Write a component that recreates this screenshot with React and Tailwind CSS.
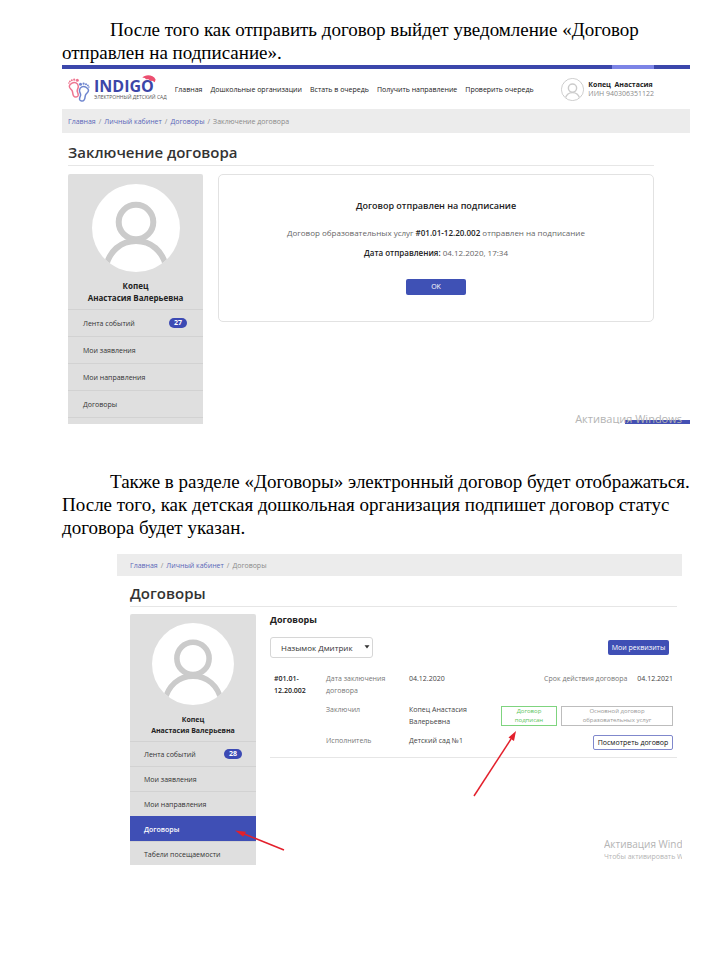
import React, { useState } from 'react';

const SANS = "font-['Open_Sans','Noto_Sans',sans-serif]";

const navLinks = [
    'Главная',
    'Дошкольные организации',
    'Встать в очередь',
    'Получить направление',
    'Проверить очередь',
];

const Avatar = ({ className }) => (
    <svg viewBox="0 0 88 88" className={className} aria-hidden="true">
        <defs>
            <clipPath id="avatar-clip">
                <circle cx="44" cy="44" r="44" />
            </clipPath>
        </defs>
        <circle cx="44" cy="44" r="44" fill="#fff" />
        <g clipPath="url(#avatar-clip)" fill="none" stroke="#cbcbcb" strokeWidth="6">
            <circle cx="44" cy="38" r="17.3" />
            <path d="M13.5 84C17 67 29 57 44 57s27 10 30.5 27" />
        </g>
    </svg>
);

const Foot = ({ color, transform }) => (
    <g transform={transform} stroke={color} fill="none" strokeWidth="1.5">
        <path d="M4 5.2C6.500 3.600 10 5 10.300 8.200c.2 2.300-1.300 3-1.100 4.900.2 1.600 1.300 2.500 1 4.300-.4 2-3.400 2.300-4.600.5-1.200-1.800-.5-3.500-1.500-5.300C3 11 1.200 10.300 1.300 8.100c.1-1.200 1.400-2.100 2.700-2.900z" />
        <g fill={color} stroke="none">
            <circle cx="9.300" cy="2.300" r="1.500" />
            <circle cx="6.200" cy="1.700" r="1.100" />
            <circle cx="3.800" cy="2.200" r="1" />
            <circle cx="1.900" cy="3.400" r=".9" />
            <circle cx=".9" cy="5.100" r=".8" />
        </g>
    </g>
);

const Logo = () => (
    <a href="#" className="flex items-center gap-1 shrink-0">
        <svg viewBox="0 0 22 25" className="w-[22px] h-[25px]" aria-hidden="true">
            <Foot color="#ee7590" transform="translate(0 1)" />
            <Foot color="#6f86cf" transform="translate(21.800 5) scale(-1 1)" />
        </svg>
        <span className="relative flex flex-col">
            <span className="text-[16px] leading-4 font-bold text-[#3c46a8]">INDIGO</span>
            <span className="text-[5px] leading-[6px] text-[#555] whitespace-nowrap">ЭЛЕКТРОННЫЙ ДЕТСКИЙ САД</span>
            <svg viewBox="0 0 14 8" className="absolute left-[48px] -top-[3px] w-[14px] h-2" aria-hidden="true">
                <path d="M.3 2.600C2.500-.5 11-1.200 13.600 4.600L12.800 7.200 10.300 5.800 8.600 6 6.400 4.200 4 4.200 2.800 2.900z" fill="#ec4f70" />
            </svg>
        </span>
    </a>
);

const Breadcrumbs = ({ items, className }) => (
    <nav className={`bg-[#ececec] flex items-center text-[7px] text-[#8a8a8a] ${className}`}>
        {items.map((item, i) => (
            <React.Fragment key={item}>
                {i > 0 && <span className="px-[3px]">/</span>}
                {i < items.length - 1 ? (
                    <a href="#" className="text-[#5a66b8]">{item}</a>
                ) : (
                    <span>{item}</span>
                )}
            </React.Fragment>
        ))}
    </nav>
);

const SidebarLink = ({ label, badge, active, className }) => (
    <a
        href="#"
        className={`flex items-center justify-between border-t text-[7px] ${className} ${
            active ? 'bg-[#3f4fb5] border-[#3f4fb5] text-white font-semibold' : 'border-[#d2d2d2] text-[#333]'
        }`}
    >
        {label}
        {badge && (
            <span className="bg-[#3c4ab4] text-white font-bold rounded-full w-[18px] h-[10px] leading-[10px] text-center">
                {badge}
            </span>
        )}
    </a>
);

/* Screen shown right after the contract has been sent */
const ContractSent = () => (
    <section className={`${SANS} relative h-[359px] overflow-hidden`}>
        <div className="flex h-1 bg-[#3b47ab] justify-end pr-9">
            <div className="w-[42px] bg-[#7c84e6]"></div>
        </div>
        <header className="h-10 pl-[6px] pr-9 flex items-center justify-between">
            <div className="flex items-center gap-2">
                <Logo />
                <nav className="flex gap-2 text-[7px] font-medium text-[#222] whitespace-nowrap">
                    {navLinks.map((link) => (
                        <a key={link} href="#">{link}</a>
                    ))}
                </nav>
            </div>
            <div className="flex items-center gap-1 whitespace-nowrap">
                <Avatar className="w-[23px] h-[23px] rounded-full border border-[#cbcbcb]" />
                <div>
                    <p className="text-[7px] leading-[9px] font-bold text-[#222]">Копец&nbsp; Анастасия</p>
                    <p className="text-[7px] leading-[9px] text-[#8a8a8a]">ИИН 940306351122</p>
                </div>
            </div>
        </header>
        <Breadcrumbs
            className="h-6 pl-[6px]"
            items={['Главная', 'Личный кабинет', 'Договоры', 'Заключение договора']}
        />
        <div className="pl-[6px] pr-9">
            <h1 className="text-[15px] leading-9 h-8 font-semibold text-[#333] border-b border-[#e6e6e6] mt-px">
                Заключение договора
            </h1>
            <div className="flex items-start gap-[15px] mt-2">
                <aside className="w-[135px] shrink-0 bg-[#dfdfdf] rounded-t-[2px] pt-[10px]">
                    <Avatar className="w-[88px] h-[88px] mx-auto" />
                    <p className="text-[8px] leading-3 font-bold text-[#222] text-center mt-2 mb-[5px]">
                        Копец<br />Анастасия Валерьевна
                    </p>
                    <SidebarLink className="h-[27px] pl-[15px] pr-4" label="Лента событий" badge="27" />
                    <SidebarLink className="h-[27px] pl-[15px] pr-4" label="Мои заявления" />
                    <SidebarLink className="h-[27px] pl-[15px] pr-4" label="Мои направления" />
                    <SidebarLink className="h-[27px] pl-[15px] pr-4" label="Договоры" />
                    <div className="h-[26px] border-t border-[#d2d2d2]"></div>
                </aside>
                <div className="flex-1 border border-[#e2e2e2] rounded-[5px] h-[148px] flex flex-col items-center text-[8px] text-[#666] pt-6">
                    <h2 className="text-[9px] leading-[14px] font-semibold text-[#222]">Договор отправлен на подписание</h2>
                    <p className="leading-3 mt-[14px]">
                        Договор образовательных услуг <b className="text-[#222] font-semibold">#01.01-12.20.002</b> отправлен на подписание
                    </p>
                    <p className="leading-3 mt-2">
                        <b className="text-[#222] font-semibold">Дата отправления:</b> 04.12.2020, 17:34
                    </p>
                    <button className="mt-5 w-[60px] h-4 rounded-[2px] bg-[#3f51b5] text-white text-[7px] leading-4">OK</button>
                </div>
            </div>
        </div>
        <div className="absolute right-0 bottom-0 w-[65px] h-1 bg-[#4450b4]"></div>
        <p className="absolute right-2 bottom-0 text-[11px] leading-[10px] text-[#b4b4b4]">Активация Windows</p>
    </section>
);

const ContractTable = () => (
    <table className="w-full text-[7px] leading-3 text-[#444] text-left border-b border-[#e6e6e6]">
        <tbody className="align-top">
            <tr className="h-[31px]">
                <th className="w-14 pl-1 pt-[3px] font-semibold text-[#222]" scope="row">#01.01-<br />12.20.002</th>
                <td className="w-[83px] pt-[3px] pr-4 text-[#777]">Дата заключения договора</td>
                <td className="w-[92px] pt-[3px]">04.12.2020</td>
                <td className="pt-[3px] pr-1 text-right whitespace-nowrap">
                    <span className="text-[#777] pr-2">Срок действия договора</span> 04.12.2021
                </td>
            </tr>
            <tr className="h-[31px]">
                <td></td>
                <td className="pt-[3px] text-[#777]">Заключил</td>
                <td className="pt-[3px] pr-6">Копец Анастасия Валерьевна</td>
                <td className="pt-[5px] pr-1">
                    <div className="flex gap-1 text-[6px] leading-[9px] text-center">
                        <span className="w-14 h-5 border border-[#7fd47f] text-[#5cc45c] px-2">Договор подписан</span>
                        <span className="flex-1 h-5 border border-[#bdbdbd] text-[#999] px-4">Основной договор образовательных услуг</span>
                    </div>
                </td>
            </tr>
            <tr className="h-[25px]">
                <td></td>
                <td className="pt-[3px] text-[#777]">Исполнитель</td>
                <td className="pt-[3px]">Детский сад №1</td>
                <td className="pt-[3px] pr-1">
                    <button className="block ml-auto w-20 h-[15px] border border-[#8088cc] rounded-[2px] text-[7px] leading-3 font-medium text-[#111] whitespace-nowrap">
                        Посмотреть договор
                    </button>
                </td>
            </tr>
        </tbody>
    </table>
);

/* Contract list with the signed status */
const ContractList = () => {
    const [child, setChild] = useState('Назымок Дмитрик');

    return (
        <section className={`${SANS} relative ml-[55px] mr-2 h-[311px] overflow-hidden`}>
            <Breadcrumbs className="h-[22px] pl-[13px]" items={['Главная', 'Личный кабинет', 'Договоры']} />
            <div className="pl-[13px] pr-[5px]">
                <h1 className="text-[15px] leading-8 h-[30px] font-semibold text-[#333] border-b border-[#e6e6e6] mt-px">
                    Договоры
                </h1>
                <div className="flex items-start gap-[14px] mt-[7px]">
                    <aside className="w-[126px] shrink-0 bg-[#dfdfdf] rounded-t-[2px] pt-[9px]">
                        <Avatar className="w-[82px] h-[82px] mx-auto" />
                        <p className="text-[7px] leading-[11px] font-bold text-[#222] text-center mt-[9px] mb-[5px]">
                            Копец<br />Анастасия Валерьевна
                        </p>
                        <SidebarLink className="h-[25px] px-[14px]" label="Лента событий" badge="28" />
                        <SidebarLink className="h-[25px] px-[14px]" label="Мои заявления" />
                        <SidebarLink className="h-[25px] px-[14px]" label="Мои направления" />
                        <SidebarLink className="h-[25px] px-[14px]" label="Договоры" active />
                        <SidebarLink className="h-[25px] px-[14px]" label="Табели посещаемости" />
                    </aside>
                    <div className="flex-1">
                        <h2 className="text-[9px] leading-3 font-bold text-[#222]">Договоры</h2>
                        <div className="flex items-center justify-between mt-[11px] mb-3 pr-2">
                            <div className="relative">
                                <select
                                    aria-label="Ребёнок"
                                    value={child}
                                    onChange={(e) => setChild(e.target.value)}
                                    className="appearance-none block w-[103px] h-[21px] border border-[#d6d6d6] rounded-[3px] bg-white pl-[10px] text-[8px] leading-4 text-[#333]"
                                >
                                    <option>Назымок Дмитрик</option>
                                </select>
                                <svg viewBox="0 0 6 4" className="absolute right-[3px] top-2 w-[6px] h-1 pointer-events-none" aria-hidden="true">
                                    <path d="M.5 .3h5L3 3.600z" fill="#333" />
                                </svg>
                            </div>
                            <button className="w-[61px] h-[15px] rounded-[2px] bg-[#3f4fb5] text-white text-[7px] leading-3 font-medium">
                                Мои реквизиты
                            </button>
                        </div>
                        <ContractTable />
                    </div>
                </div>
            </div>
            <div className="absolute right-0 bottom-0 w-[78px] h-7 overflow-hidden whitespace-nowrap text-[#b4b4b4]">
                <p className="text-[10px] leading-[14px]">Активация Windows</p>
                <p className="text-[7px] leading-[11px]">Чтобы активировать Windows</p>
            </div>
        </section>
    );
};

/* Red pointers over the active menu item and the signed badge */
const Arrows = () => (
    <svg viewBox="0 0 300 150" className="absolute left-[169px] top-[176px] w-[300px] h-[150px] pointer-events-none" aria-hidden="true">
        <g stroke="#e3202c" fill="#e3202c" strokeWidth="1.5">
            <path d="M53 120L12 103.500" />
            <path d="M4 100.500l11 1.200-2.800 5z" stroke="none" />
            <path d="M243 66L280 9" />
            <path d="M285 1l-2 10-5.500-3.500z" stroke="none" />
        </g>
    </svg>
);

const App = () => {
    return (
        <main className="min-h-screen bg-white pl-[62px] pr-[30px] pt-[18px] font-['Liberation_Serif',serif] text-[19px] leading-[23px] text-black">
            <p className="indent-12 h-[47px]">
                После того как отправить договор выйдет уведомление «Договор отправлен на подписание».
            </p>
            <ContractSent />
            <p className="indent-12 mt-[46px] mb-[15px]">
                Также в разделе «Договоры» электронный договор будет отображаться. После того, как детская дошкольная организация подпишет договор статус договора будет указан.
            </p>
            <div className="relative">
                <ContractList />
                <Arrows />
            </div>
        </main>
    );
};

export default App;
